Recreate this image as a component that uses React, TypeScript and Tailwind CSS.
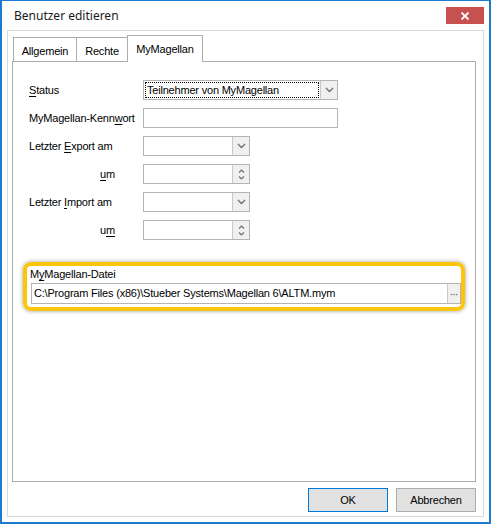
import React from "react";

const F = "font-['Liberation_Sans',Arial,sans-serif] text-[11px] tracking-[-0.2px] text-black";

function ChevronDown() {
  return (
    <svg width="9" height="6" viewBox="0 0 9 6">
      <polyline points="1,1 4.5,4.5 8,1" fill="none" stroke="#707070" strokeWidth="1.3" />
    </svg>
  );
}

function Spin() {
  return (
    <div className="flex flex-col items-center justify-center gap-[3px]">
      <svg width="7" height="4" viewBox="0 0 7 4">
        <polyline points="1,3.5 3.5,1 6,3.5" fill="none" stroke="#707070" strokeWidth="1.2" />
      </svg>
      <svg width="7" height="4" viewBox="0 0 7 4">
        <polyline points="1,0.5 3.5,3 6,0.5" fill="none" stroke="#707070" strokeWidth="1.2" />
      </svg>
    </div>
  );
}

function SmallCombo({ spin }: { spin?: boolean }) {
  return (
    <div className="flex h-[20px] w-[107px] border border-[#b4b4b4] bg-white">
      <div className="flex-1" />
      <div className="flex w-[17px] items-center justify-center border-l border-[#c8c8c8] bg-[#f0f0f0]">
        {spin ? <Spin /> : <ChevronDown />}
      </div>
    </div>
  );
}

function Label({ children, right }: { children: React.ReactNode; right?: boolean }) {
  return (
    <div className={right ? "flex items-center justify-end pr-[28px]" : "flex items-center"}>
      <span className={F}>{children}</span>
    </div>
  );
}

const U = ({ c }: { c: string }) => <span className="underline underline-offset-[2px]">{c}</span>;

export default function App() {
  return (
    <div className="flex h-[524px] w-[491px] flex-col border-x-2 border-b-2 border-t border-[#1a7bd0] bg-white">
      {/* Title bar */}
      <div className="flex h-[29px] shrink-0 items-start justify-between">
        <div className="flex h-[29px] items-center pl-[12px] font-['Noto_Sans',sans-serif] text-[12px] text-[#1a1a1a]">
          Benutzer editieren
        </div>
        <div className="mr-[5px] mt-[6px] flex h-[17px] w-[38px] items-center justify-center bg-[#c75050]">
          <svg width="10" height="8" viewBox="0 0 10 8">
            <path d="M1.5 0.5 L8.5 7.5 M8.5 0.5 L1.5 7.5" stroke="#fff" strokeWidth="1.8" />
          </svg>
        </div>
      </div>

      {/* Client area */}
      <div className="mx-[5px] flex h-[487px] shrink-0 flex-col border border-[#d9d9d9] bg-white">
        <div className="ml-[4px] flex w-[464px] flex-col pt-[4px]">
          {/* Tabs */}
          <div className="relative z-10 flex h-[26px] items-end pl-[1px]">
            <div className={`flex h-[24px] w-[64px] items-center justify-center border-l border-r border-t border-[#adadad] bg-white pt-[3px] ${F}`}>
              Allgemein
            </div>
            <div className={`flex h-[24px] w-[51px] items-center justify-center border-r border-t border-[#adadad] bg-white pt-[3px] ${F}`}>
              Rechte
            </div>
            <div className={`-mb-px -ml-px flex h-[27px] w-[76px] items-center justify-center border-l border-r border-t border-[#adadad] bg-white ${F}`}>
              MyMagellan
            </div>
          </div>

          {/* Panel */}
          <div className="flex h-[421px] flex-col border border-[#acacac] bg-white pl-[16px] pt-[18px]">
            <div className="grid grid-cols-[114px_auto] gap-y-[8px]">
              <Label><U c="S" />tatus</Label>
              <div className="flex h-[20px] w-[195px] border border-[#b4b4b4] bg-white">
                <div className="flex flex-1 p-[1px]">
                  <div className={`flex flex-1 items-center border border-dotted border-black pl-[1px] ${F}`}>
                    Teilnehmer von MyMagellan
                  </div>
                </div>
                <div className="flex w-[17px] items-center justify-center border-l border-[#c8c8c8] bg-[#f0f0f0]">
                  <ChevronDown />
                </div>
              </div>

              <Label>MyMagellan-Kenn<U c="w" />ort</Label>
              <div className="h-[20px] w-[195px] border border-[#b4b4b4] bg-white" />

              <Label>Letzter <U c="E" />xport am</Label>
              <SmallCombo />

              <Label right><U c="u" />m</Label>
              <SmallCombo spin />

              <Label>Letzter <U c="I" />mport am</Label>
              <SmallCombo />

              <Label right>u<U c="m" /></Label>
              <SmallCombo spin />
            </div>

            {/* Highlighted file field */}
            <div className="ml-[-6px] mt-[22px] flex h-[49px] w-[442px] flex-col rounded-[8px] border-4 border-[#fcc50c] shadow-[0_0_4px_rgba(0,0,0,0.4)]">
              <div className="flex h-[17px] items-center pl-[3px]">
                <span className={F}>M<U c="y" />Magellan-Datei</span>
              </div>
              <div className="ml-[4px] flex h-[21px] w-[430px] border border-[#b4b4b4] bg-white">
                <div className={`flex flex-1 items-center pl-[2px] ${F}`}>
                  C:\Program Files (x86)\Stueber Systems\Magellan 6\ALTM.mym
                </div>
                <div className="flex w-[13px] items-center justify-center border-l border-[#c8c8c8] bg-[#f0f0f0] text-[10px] leading-none text-[#606060]">
                  ···
                </div>
              </div>
            </div>
          </div>

          {/* Buttons */}
          <div className="mt-[6px] flex justify-end gap-[8px]">
            <div className={`flex h-[24px] w-[80px] items-center justify-center border border-[#0078d7] bg-[#e1e1e1] ${F}`}>
              OK
            </div>
            <div className={`flex h-[24px] w-[80px] items-center justify-center border border-[#adadad] bg-[#e1e1e1] ${F}`}>
              Abbrechen
            </div>
          </div>
        </div>
      </div>
    </div>
  );
}
